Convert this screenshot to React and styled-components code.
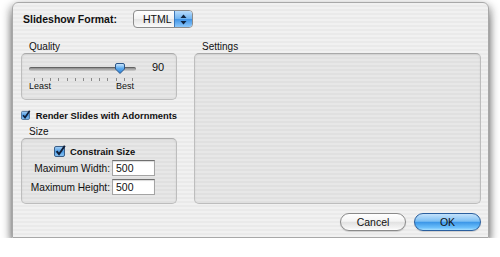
import React from "react";
import styled, { createGlobalStyle } from "styled-components";

const GlobalStyle = createGlobalStyle`
  html, body {
    margin: 0;
    padding: 0;
    background: #ffffff;
  }
  body {
    font-family: "Lucida Grande", "Liberation Sans", Arial, sans-serif;
    font-size: 10px;
    color: #111;
  }
`;

const Sheet = styled.div`
  margin: 2px 0 0 12px;
  width: 477px;
  height: 236px;
  box-sizing: border-box;
  border: 1px solid #a8a8a8;
  border-radius: 6px 6px 0 0;
  background: repeating-linear-gradient(
    to bottom,
    #f1f1f1 0px,
    #f1f1f1 2px,
    #eaeaea 2px,
    #eaeaea 4px
  );
  box-shadow: 0 10px 10px -3px rgba(0, 0, 0, 0.6), -3px 3px 8px rgba(0, 0, 0, 0.28),
    3px 3px 8px rgba(0, 0, 0, 0.28);
  padding: 7px 7px 0 8px;
  display: flex;
  flex-direction: column;
`;

const Header = styled.div`
  display: flex;
  align-items: center;
  height: 18px;
  gap: 16px;
`;

const HeaderLabel = styled.span`
  margin-left: 2px;
  font-size: 10.5px;
  font-weight: bold;
  white-space: nowrap;
`;

const Popup = styled.div`
  display: flex;
  width: 60px;
  height: 18px;
  box-sizing: border-box;
  border: 1px solid #8c8c8c;
  border-radius: 4px;
  overflow: hidden;
  background: linear-gradient(#ffffff, #f2f2f2 50%, #e4e4e4 51%, #fafafa);
`;

const PopupText = styled.span`
  flex: 1;
  padding-left: 9px;
  font-size: 10.5px;
  line-height: 16px;
`;

const PopupArrows = styled.span`
  width: 17px;
  display: flex;
  align-items: center;
  justify-content: center;
  border-left: 1px solid #3d77b8;
  background: linear-gradient(#b9dcfb, #6fb3f0 50%, #3f93e6 51%, #8cc8fb);
`;

const Main = styled.div`
  margin-top: 13px;
  display: grid;
  grid-template-columns: 156px 287px;
  column-gap: 17px;
`;

const Column = styled.div`
  display: flex;
  flex-direction: column;
`;

const GroupLabel = styled.div`
  height: 12px;
  line-height: 12px;
  padding-left: ${(p) => p.$indent || 8}px;
  margin-top: ${(p) => p.$top || 0}px;
`;

const GroupBox = styled.div`
  box-sizing: border-box;
  height: ${(p) => p.$height}px;
  border: 1px solid #bdbdbd;
  border-top-color: #a9a9a9;
  border-radius: 5px;
  background: rgba(0, 0, 0, 0.04);
  box-shadow: inset 0 1px 2px rgba(0, 0, 0, 0.08);
`;

const QualityBox = styled(GroupBox)`
  padding: 9px 7px 0 7px;
  display: flex;
  align-items: flex-start;
`;

const SliderCol = styled.div`
  width: 107px;
  display: flex;
  flex-direction: column;
`;

const TrackArea = styled.div`
  position: relative;
  height: 11px;
`;

const Track = styled.div`
  margin-top: 4px;
  height: 4px;
  border-radius: 2px;
  background: linear-gradient(#7a7a7a, #a9a9a9 60%, #d0d0d0);
  box-shadow: inset 0 1px 0 rgba(0, 0, 0, 0.25);
`;

const Knob = styled.svg`
  position: absolute;
  top: 0;
`;

const Ticks = styled.div`
  margin-top: 4px;
  display: flex;
  justify-content: space-between;
  padding: 0 3px 0 5px;
`;

const Tick = styled.span`
  width: 1px;
  height: 3px;
  background: #8a8a8a;
`;

const TickLabels = styled.div`
  display: flex;
  justify-content: space-between;
  font-size: 9px;
  line-height: 10px;
  padding-right: 2px;
`;

const Value = styled.span`
  margin-left: 16px;
  font-size: 11px;
  line-height: 11px;
  margin-top: -1px;
`;

const CheckRow = styled.label`
  display: flex;
  align-items: center;
  gap: ${(p) => p.$gap || 5}px;
  height: 12px;
  margin-top: ${(p) => p.$top || 0}px;
  padding-left: ${(p) => p.$indent || 0}px;
  font-weight: bold;
  font-size: 9.4px;
  white-space: nowrap;
`;

const SizeBox = styled(GroupBox)`
  padding: 6px 0 0 0;
`;

const FormGrid = styled.div`
  margin-top: 3px;
  display: grid;
  grid-template-columns: 88px 43px;
  column-gap: 2px;
  row-gap: 3px;
  align-items: center;
`;

const FieldLabel = styled.span`
  text-align: right;
  font-size: 10.2px;
  white-space: nowrap;
`;

const Field = styled.div`
  box-sizing: border-box;
  height: 16px;
  border: 1px solid #a4a4a4;
  border-top-color: #6f6f6f;
  background: #fff;
  box-shadow: inset 0 1px 1px rgba(0, 0, 0, 0.15);
  padding-left: 3px;
  font-size: 10.5px;
  line-height: 14px;
`;

const SettingsBox = styled(GroupBox)`
  height: 151px;
`;

const Buttons = styled.div`
  margin-top: 9px;
  display: flex;
  justify-content: flex-end;
  gap: 8px;
`;

const Button = styled.div`
  box-sizing: border-box;
  width: ${(p) => p.$width}px;
  height: 18px;
  border-radius: 9px;
  text-align: center;
  font-size: 10.5px;
  line-height: 16px;
  border: 1px solid ${(p) => (p.$primary ? "#2a5f9e" : "#8a8a8a")};
  background: ${(p) =>
    p.$primary
      ? "linear-gradient(#c4e2fb, #7ec0f4 45%, #3c97e8 52%, #6cc0fb 85%, #a8e0ff)"
      : "linear-gradient(#ffffff, #f4f4f4 45%, #e2e2e2 52%, #f2f2f2 85%, #ffffff)"};
  box-shadow: 0 1px 1px rgba(0, 0, 0, 0.15);
`;

function CheckBox() {
  return (
    <svg width="12" height="12" viewBox="0 0 12 12">
      <defs>
        <linearGradient id="cb" x1="0" y1="0" x2="0" y2="1">
          <stop offset="0" stopColor="#a9d2f7" />
          <stop offset="0.5" stopColor="#4d9be3" />
          <stop offset="1" stopColor="#8cc6f6" />
        </linearGradient>
      </defs>
      <rect x="0.5" y="1.5" width="10" height="10" rx="1.5" fill="url(#cb)" stroke="#3b5e86" />
      <path d="M2.6 6.2 L5 9.2 L10.8 0.8" fill="none" stroke="#0f1f3a" strokeWidth="2" />
    </svg>
  );
}

function Slider({ value }) {
  const center = 5 + (value / 100) * 96;
  return (
    <SliderCol>
      <TrackArea>
        <Track />
        <Knob width="10" height="11" viewBox="0 0 10 11" style={{ left: center - 5 }}>
          <defs>
            <linearGradient id="kn" x1="0" y1="0" x2="0" y2="1">
              <stop offset="0" stopColor="#d4ecff" />
              <stop offset="0.5" stopColor="#5aa9ee" />
              <stop offset="1" stopColor="#2b7fd6" />
            </linearGradient>
          </defs>
          <path
            d="M0.5 2 Q0.5 0.5 2 0.5 H8 Q9.5 0.5 9.5 2 V6 L5 10.5 L0.5 6 Z"
            fill="url(#kn)"
            stroke="#2d5688"
          />
        </Knob>
      </TrackArea>
      <Ticks>
        {Array.from({ length: 13 }).map((_, i) => (
          <Tick key={i} />
        ))}
      </Ticks>
      <TickLabels>
        <span>Least</span>
        <span>Best</span>
      </TickLabels>
    </SliderCol>
  );
}

export default function App() {
  return (
    <>
      <GlobalStyle />
      <Sheet>
        <Header>
          <HeaderLabel>Slideshow Format:</HeaderLabel>
          <Popup>
            <PopupText>HTML</PopupText>
            <PopupArrows>
              <svg width="7" height="11" viewBox="0 0 7 11">
                <path d="M3.5 0.5 L6.5 4 H0.5 Z" fill="#10243f" />
                <path d="M3.5 10.5 L6.5 7 H0.5 Z" fill="#10243f" />
              </svg>
            </PopupArrows>
          </Popup>
        </Header>

        <Main>
          <Column>
            <GroupLabel>Quality</GroupLabel>
            <QualityBox $height={47}>
              <Slider value={90} />
              <Value>90</Value>
            </QualityBox>
            <CheckRow $top={9}>
              <CheckBox />
              Render Slides with Adornments
            </CheckRow>
            <GroupLabel $top={5}>Size</GroupLabel>
            <SizeBox $height={66}>
              <CheckRow $indent={32} $gap={4}>
                <CheckBox />
                Constrain Size
              </CheckRow>
              <FormGrid>
                <FieldLabel>Maximum Width:</FieldLabel>
                <Field>500</Field>
                <FieldLabel>Maximum Height:</FieldLabel>
                <Field>500</Field>
              </FormGrid>
            </SizeBox>
          </Column>
          <Column>
            <GroupLabel>Settings</GroupLabel>
            <SettingsBox $height={151} />
          </Column>
        </Main>

        <Buttons>
          <Button $width={66}>Cancel</Button>
          <Button $width={67} $primary>
            OK
          </Button>
        </Buttons>
      </Sheet>
    </>
  );
}
